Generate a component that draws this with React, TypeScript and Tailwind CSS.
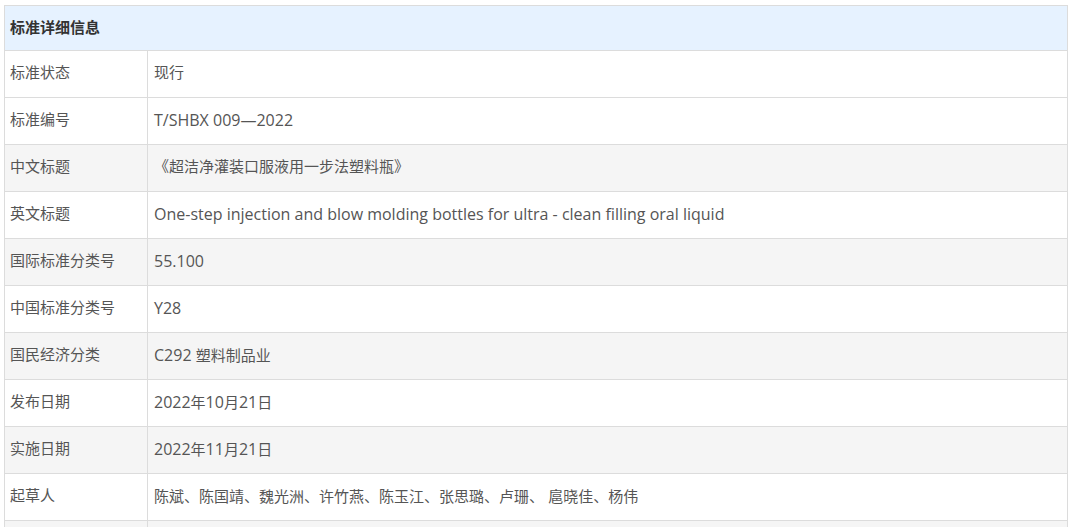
import React from "react";

const rows: [string, string][] = [
  ["标准状态", "现行"],
  ["标准编号", "T/SHBX 009—2022"],
  ["中文标题", "《超洁净灌装口服液用一步法塑料瓶》"],
  ["英文标题", "One-step injection and blow molding bottles for ultra - clean filling oral liquid"],
  ["国际标准分类号", "55.100"],
  ["中国标准分类号", "Y28"],
  ["国民经济分类", "C292 塑料制品业"],
  ["发布日期", "2022年10月21日"],
  ["实施日期", "2022年11月21日"],
  ["起草人", "陈斌、陈国靖、魏光洲、许竹燕、陈玉江、张思璐、卢珊、 扈晓佳、杨伟"],
  ["", ""],
];

// latin runs are set a touch larger so they keep the width of the original font
function Mixed({ text }: { text: string }) {
  const parts = text.match(/[\u3000-\u9fff\uff00-\uffef、《》]+|[^\u3000-\u9fff\uff00-\uffef、《》]+/g) || [];
  return (
    <>
      {parts.map((p, i) =>
        /[\u3000-\u9fff\uff00-\uffef、《》]/.test(p) ? (
          <span key={i}>{p}</span>
        ) : (
          <span key={i} className="text-[16px]">
            {p}
          </span>
        )
      )}
    </>
  );
}

export default function App() {
  return (
    <div
      className="bg-white h-[527px] overflow-hidden pl-[4px] pt-[5px]"
      style={{ fontFamily: '"Open Sans", "Noto Sans CJK SC", sans-serif' }}
    >
      <table className="w-[1064px] border-collapse table-fixed text-[15px] text-[#555]">
        <colgroup>
          <col className="w-[143px]" />
          <col />
        </colgroup>
        <thead>
          <tr className="h-[45px] bg-[#e6f2ff]">
            <th
              colSpan={2}
              className="border border-[#dcdcdc] px-[5px] pb-[1px] text-left font-bold text-[#333]"
            >
              标准详细信息
            </th>
          </tr>
        </thead>
        <tbody>
          {rows.map(([label, value], i) => (
            <tr
              key={i}
              className={i % 2 === 0 && i > 0 ? "h-[47px] bg-[#f5f5f5]" : "h-[47px] bg-white"}
            >
              <td className="border border-[#dcdcdc] px-[5px] pb-[3px] whitespace-nowrap">{label}</td>
              <td className="border border-[#dcdcdc] px-[6px] pb-[3px] whitespace-nowrap">
                <Mixed text={value} />
              </td>
            </tr>
          ))}
        </tbody>
      </table>
    </div>
  );
}
